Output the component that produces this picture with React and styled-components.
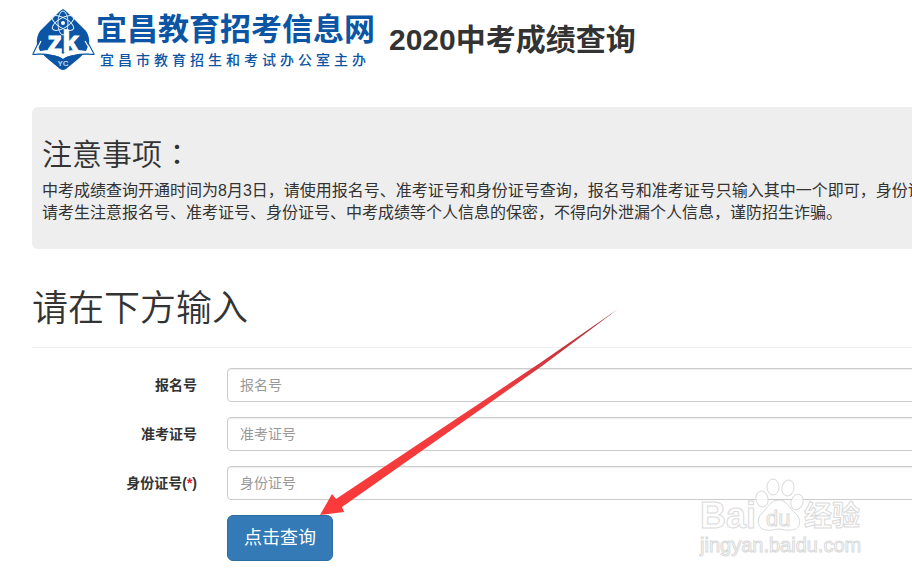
import React from 'react';
import styled, { createGlobalStyle } from 'styled-components';

const fields = [
  { id: 'signup', label: '报名号', placeholder: '报名号' },
  { id: 'ticket', label: '准考证号', placeholder: '准考证号' },
  { id: 'idcard', label: '身份证号', placeholder: '身份证号', required: true },
];

const SiteLogo = () => (
  <LogoMark viewBox="0 0 64 62" aria-hidden="true">
    <path
      d="M31 0 Q33 1 36 4 L54 22 Q58 28 57 35 L54 42 Q50 47 45 51 L34 60 Q31 62 28 60 L17 51 Q12 47 8 42 L5 35 Q4 28 8 22 L26 4 Q29 1 31 0Z"
      fill="#0b55a4"
    />
    {/* 书页 */}
    <path d="M8 30 L1 45 L10 44 M54 30 L62 45 L53 44" fill="none" stroke="#0b55a4" strokeWidth="1.2" />
    <path d="M9 32 L3 44 M53 32 L60 44" stroke="#fff" strokeWidth="1.2" />
    <path
      d="M1 45 Q8 41 18 41 Q28 41 31 45 Q34 41 44 41 Q54 41 62 45 Q50 44 42 46 Q34 47 31 50 Q28 47 20 46 Q12 44 1 45Z"
      fill="#fff"
    />
    <path d="M1 45.500 Q12 44.500 20 46.500 Q28 48 31 51 Q34 48 42 46.500 Q50 44.500 62 45.500" fill="none" stroke="#0b55a4" strokeWidth="1.2" />
    {/* 原子 */}
    <g fill="none" stroke="#dcebf8" strokeWidth="1">
      <ellipse cx="31" cy="14" rx="12" ry="5" transform="rotate(30 31 14)" />
      <ellipse cx="31" cy="14" rx="12" ry="5" transform="rotate(90 31 14)" />
      <ellipse cx="31" cy="14" rx="12" ry="5" transform="rotate(150 31 14)" />
    </g>
    <circle cx="31" cy="14" r="2" fill="#fff" />
    <LogoLetters x="31" y="43" $size={30} stroke="#fff" strokeWidth="1">zk</LogoLetters>
    <LogoLetters x="31" y="57" $size={8} $light>YC</LogoLetters>
  </LogoMark>
);

const Watermark = () => (
  <WatermarkArt viewBox="0 0 170 84" aria-hidden="true">
    <g fill="#fff" stroke="#d2d2d2" strokeWidth="1">
      <WatermarkText x="1" y="52" $size={36} $bold>Bai</WatermarkText>
      <ellipse cx="63" cy="23" rx="6" ry="8" transform="rotate(-12 63 23)" />
      <ellipse cx="74" cy="11" rx="6" ry="8" />
      <ellipse cx="89" cy="12" rx="6" ry="8" transform="rotate(12 89 12)" />
      <ellipse cx="98" cy="26" rx="6" ry="8" transform="rotate(18 98 26)" />
      <path d="M80 24 C88 24 90 32 96 37 C104 44 101 54 92 54 C87 55 84 53 80 53 C75 53 73 55 67 54 C58 53 57 43 63 37 C70 31 71 24 80 24Z" />
      <WatermarkText x="67" y="50" $size={22}>du</WatermarkText>
      <WatermarkText x="105" y="50" $size={28} $bold>经验</WatermarkText>
      <WatermarkText x="1" y="76" $size={20}>jingyan.baidu.com</WatermarkText>
    </g>
  </WatermarkArt>
);

const App = () => {
  return (
    <>
      <GlobalStyle />
      <Page>
        <Container>
          {/* 页头 */}
          <Header>
            <Brand>
              <SiteLogo />
              <BrandText>
                <BrandName>宜昌教育招考信息网</BrandName>
                <BrandOwner>宜昌市教育招生和考试办公室主办</BrandOwner>
              </BrandText>
            </Brand>
            <Title>2020中考成绩查询</Title>
          </Header>

          {/* 注意事项 */}
          <Notice>
            <NoticeTitle>
              注意事项<Colon>：</Colon>
            </NoticeTitle>
            <NoticeText>
              中考成绩查询开通时间为8月3日，请使用报名号、准考证号和身份证号查询，报名号和准考证号只输入其中一个即可，身份证
            </NoticeText>
            <NoticeText>
              请考生注意报名号、准考证号、身份证号、中考成绩等个人信息的保密，不得向外泄漏个人信息，谨防招生诈骗。
            </NoticeText>
          </Notice>

          {/* 查询表单 */}
          <SectionTitle>请在下方输入</SectionTitle>
          <Form onSubmit={(e) => e.preventDefault()}>
            {fields.map((field) => (
              <Row key={field.id}>
                <Label htmlFor={field.id}>
                  {field.label}
                  {field.required && <>(<Required>*</Required>)</>}
                </Label>
                <Input id={field.id} type="text" placeholder={field.placeholder} />
              </Row>
            ))}
            <Row>
              <SubmitButton type="submit">点击查询</SubmitButton>
            </Row>
          </Form>
        </Container>

        <Arrow viewBox="0 0 300 208" aria-hidden="true">
          <defs>
            <linearGradient id="arrowFill" x1="0" y1="1" x2="1" y2="0">
              <stop offset="0" stopColor="#fb3a3a" />
              <stop offset="0.6" stopColor="#f03a3e" />
              <stop offset="1" stopColor="#a8323c" />
            </linearGradient>
          </defs>
          <path
            d="M0 206 L12 185 L16 190 L160 94 L220 54 L298 0 L222 57 L164 98 L22 198 L24 203 Z"
            fill="url(#arrowFill)"
          />
        </Arrow>
        <Watermark />
      </Page>
    </>
  );
};

// Styled Components
const GlobalStyle = createGlobalStyle`
  * {
    box-sizing: border-box;
  }

  body {
    margin: 0;
    background: #fff;
    color: #333;
    font-family: 'Liberation Sans', 'Noto Sans CJK SC', sans-serif;
    font-size: 14px;
    line-height: 20px;
  }
`;

const Page = styled.div`
  position: relative;
  min-height: 100vh;
  overflow: hidden;
`;

const Container = styled.div`
  min-width: 1172px;
  padding: 8px 0 0 32px;
`;

const Header = styled.header`
  display: flex;
  align-items: center;
  gap: 14px;
  height: 64px;
`;

const Brand = styled.div`
  display: flex;
  align-items: center;
  color: #0b55a4;
`;

const LogoMark = styled.svg`
  width: 64px;
  height: 62px;
`;

const LogoLetters = styled.text`
  fill: ${({ $light }) => ($light ? '#b9d6ef' : '#fff')};
  font-family: 'Liberation Sans', sans-serif;
  font-size: ${({ $size }) => $size}px;
  font-weight: bold;
  text-anchor: middle;
`;

const BrandText = styled.div`
  display: flex;
  flex-direction: column;
`;

const BrandName = styled.div`
  font-size: 31px;
  font-weight: bold;
  line-height: 40px;
  white-space: nowrap;
`;

const BrandOwner = styled.div`
  padding-left: 4px;
  font-size: 14px;
  font-weight: 500;
  letter-spacing: 4px;
  line-height: 20px;
  white-space: nowrap;
`;

const Title = styled.h1`
  margin: 0;
  font-size: 30px;
  font-weight: bold;
  line-height: 34px;
  white-space: nowrap;
`;

const Notice = styled.section`
  margin-top: 35px;
  padding: 30px 10px 25px;
  border-radius: 6px;
  background: #eee;
`;

const NoticeTitle = styled.h2`
  margin: 0 0 9px;
  font-size: 30px;
  font-weight: 350;
  line-height: 33px;
`;

const Colon = styled.span`
  font-family: 'Noto Sans CJK JP', sans-serif;
  line-height: 1;
`;

const NoticeText = styled.p`
  margin: 0;
  font-size: 16px;
  font-weight: 400;
  line-height: 22px;
  white-space: nowrap;
`;

const SectionTitle = styled.h2`
  margin: 40px 0 20px;
  padding-bottom: 18px;
  border-bottom: 1px solid #eee;
  font-size: 36px;
  font-weight: 350;
  line-height: 40px;
`;

const Form = styled.form`
  display: flex;
  flex-direction: column;
  gap: 15px;
`;

const Row = styled.div`
  display: grid;
  grid-template-columns: 165px 1fr;
  column-gap: 30px;
  align-items: center;
`;

const Label = styled.label`
  font-weight: bold;
  text-align: right;
`;

const Required = styled.span`
  color: #d9202a;
`;

const Input = styled.input`
  width: 100%;
  height: 34px;
  padding: 6px 12px;
  border: 1px solid #ccc;
  border-radius: 4px;
  background: #fff;
  box-shadow: inset 0 1px 1px rgba(0, 0, 0, 0.075);
  color: #555;
  font-family: inherit;
  font-size: 14px;

  &::placeholder {
    color: #999;
  }
`;

const SubmitButton = styled.button`
  grid-column: 2;
  justify-self: start;
  height: 46px;
  padding: 0 16px;
  border: 1px solid #2e6da4;
  border-radius: 6px;
  background: #337ab7;
  color: #fff;
  font-family: inherit;
  font-size: 18px;
  line-height: 24px;
  cursor: pointer;
`;

const Arrow = styled.svg`
  position: absolute;
  top: 309px;
  left: 320px;
  width: 300px;
  height: 208px;
  pointer-events: none;
`;

const WatermarkArt = styled.svg`
  position: absolute;
  right: 43px;
  bottom: 14px;
  width: 170px;
  height: 84px;
  opacity: 0.8;
  pointer-events: none;
`;

const WatermarkText = styled.text`
  font-family: 'Liberation Sans', 'Noto Sans CJK SC', sans-serif;
  font-size: ${({ $size }) => $size}px;
  font-weight: ${({ $bold }) => ($bold ? 'bold' : 'normal')};
`;

export default App;
